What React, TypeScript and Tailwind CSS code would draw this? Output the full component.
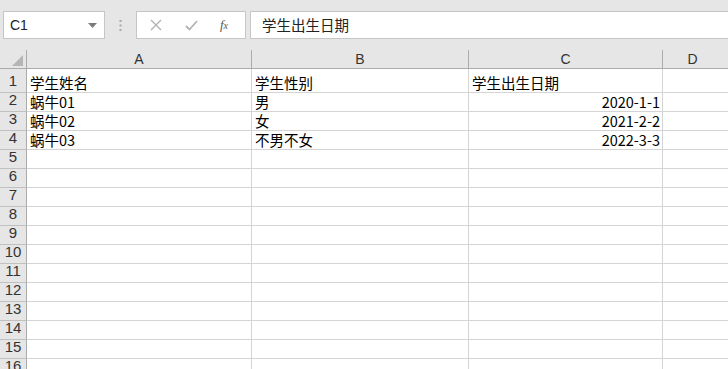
import React from 'react';

const rows = [
  { n: 1, a: '学生姓名', b: '学生性别', c: '学生出生日期', cRight: false },
  { n: 2, a: '蜗牛01', b: '男', c: '2020-1-1', cRight: true },
  { n: 3, a: '蜗牛02', b: '女', c: '2021-2-2', cRight: true },
  { n: 4, a: '蜗牛03', b: '不男不女', c: '2022-3-3', cRight: true },
];

const font = { fontFamily: '"Noto Sans CJK SC", "Liberation Sans", sans-serif' };

const App = () => {
  const allRows = Array.from({ length: 17 }, (_, i) => {
    const found = rows.find((r) => r.n === i + 1);
    return found || { n: i + 1, a: '', b: '', c: '', cRight: false };
  });

  return (
    <div className="w-[728px] h-[369px] overflow-hidden bg-[#e6e6e6] flex flex-col" style={font}>
      {/* yellow strip */}
      <div className="h-[2px] bg-[#f1e58c]" />

      {/* Formula bar */}
      <div className="flex items-center pt-[11px] pb-[11px]">
        <div className="ml-[3px] w-[102px] h-[28px] bg-white border border-[#c6c6c6] flex items-center justify-between pl-[6px] pr-[7px]">
          <span className="text-[14px] text-[#222]" style={{ fontFamily: '"Liberation Sans", sans-serif' }}>C1</span>
          <svg width="9" height="5" viewBox="0 0 9 5">
            <path d="M0 0 L9 0 L4.5 5 Z" fill="#7a7a7a" />
          </svg>
        </div>
        <div className="w-[31px] flex justify-center">
          <svg width="3" height="11" viewBox="0 0 3 11">
            <rect x="0.5" y="0" width="2" height="2" fill="#a8a8a8" />
            <rect x="0.5" y="4.5" width="2" height="2" fill="#a8a8a8" />
            <rect x="0.5" y="9" width="2" height="2" fill="#a8a8a8" />
          </svg>
        </div>
        <div className="w-[110px] h-[28px] bg-white border border-[#c6c6c6] flex items-center">
          <div className="w-[38px] flex justify-center">
            <svg width="12" height="12" viewBox="0 0 12 12">
              <path d="M1 1 L11 11 M11 1 L1 11" stroke="#b3b3b3" strokeWidth="1.4" />
            </svg>
          </div>
          <div className="w-[32px] flex justify-center">
            <svg width="13" height="11" viewBox="0 0 13 11">
              <path d="M1 6 L4.5 9.5 L12 1" stroke="#b3b3b3" strokeWidth="1.8" fill="none" />
            </svg>
          </div>
          <div className="w-[34px] flex justify-center">
            <span className="text-[13px] italic text-[#555]" style={{ fontFamily: '"Liberation Serif", serif' }}>
              f<span className="text-[10px]">x</span>
            </span>
          </div>
        </div>
        <div className="ml-[4px] flex-1 h-[28px] bg-white border border-[#c6c6c6] border-r-0 flex items-center pl-[11px]">
          <span className="text-[14.5px] text-[#222]">学生出生日期</span>
        </div>
      </div>

      {/* Column headers */}
      <div className="flex h-[19px] border-b border-[#ababab] text-[14px] text-[#333]" style={{ fontFamily: '"Liberation Sans", sans-serif' }}>
        <div className="w-[27px] border-r border-[#ababab] flex items-end justify-end pr-[3px] pb-[2px]">
          <svg width="11" height="11" viewBox="0 0 11 11">
            <path d="M11 0 L11 11 L0 11 Z" fill="#b5b5b5" />
          </svg>
        </div>
        <div className="w-[225px] border-r border-[#ababab] flex items-center justify-center">A</div>
        <div className="w-[217px] border-r border-[#ababab] flex items-center justify-center">B</div>
        <div className="w-[194px] border-r border-[#ababab] flex items-center justify-center">C</div>
        <div className="flex-1 flex items-center justify-center pr-[6px]">D</div>
      </div>

      {/* Grid */}
      <div className="flex flex-col bg-white">
        {allRows.map((r) => (
          <div
            key={r.n}
            className={`flex border-b border-[#d4d4d4] text-[14.5px] text-black ${r.n === 1 ? 'h-[24px]' : 'h-[19px]'}`}
          >
            <div
              className="w-[27px] bg-[#e6e6e6] border-r border-[#ababab] border-b border-b-[#c0c0c0] -mb-px flex items-end justify-center text-[15px] text-[#333]"
              style={{ fontFamily: '"Liberation Sans", sans-serif' }}
            >
              {r.n}
            </div>
            <div className="w-[225px] border-r border-[#d4d4d4] flex items-end pl-[3px] leading-[18px]">{r.a}</div>
            <div className="w-[217px] border-r border-[#d4d4d4] flex items-end pl-[3px] leading-[18px]">{r.b}</div>
            <div
              className={`w-[194px] border-r border-[#d4d4d4] flex items-end leading-[18px] ${r.cRight ? 'justify-end pr-[2px]' : 'pl-[3px]'}`}
            >
              {r.c}
            </div>
            <div className="flex-1" />
          </div>
        ))}
      </div>
    </div>
  );
};

export default App;
